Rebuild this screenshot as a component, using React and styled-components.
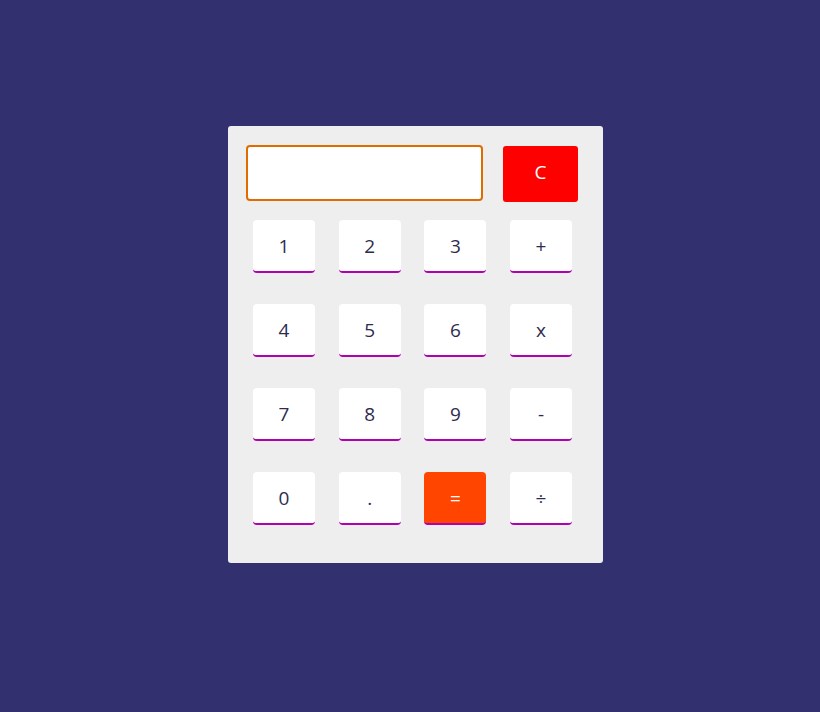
import React, { useState } from "react"
import styled, { createGlobalStyle } from "styled-components"

const GlobalStyle = createGlobalStyle`
    body {
        margin: 0;
        background: #333070;
        font-family: "Open Sans", "Liberation Sans", sans-serif;
    }
`

const Page = styled.div`
    min-height: 712px;
    padding: 126px 0 0 228px;
    box-sizing: border-box;
`

const Panel = styled.div`
    width: 375px;
    height: 437px;
    box-sizing: border-box;
    padding: 19px 18px;
    background: #eeeeee;
    border-radius: 3px;
`

const TopRow = styled.div`
    display: flex;
    align-items: flex-start;
    gap: 20px;
`

const Display = styled.input`
    width: 237px;
    height: 56px;
    box-sizing: border-box;
    border: 2px solid #e06c00;
    border-radius: 4px;
    background: #ffffff;
    font-family: inherit;
    font-size: 20px;
    padding: 0 10px;
    outline: none;
`

const ClearButton = styled.button`
    width: 75px;
    height: 56px;
    margin-top: 1px;
    padding: 0 0 4px;
    border: none;
    border-radius: 3px;
    background: #ff0000;
    color: #ffffff;
    font-family: inherit;
    font-size: 19px;
    cursor: pointer;
`

const Keys = styled.div`
    display: grid;
    grid-template-columns: repeat(4, 62px);
    column-gap: 23.67px;
    row-gap: 31px;
    margin: 18px 0 0 7px;
`

const Key = styled.button`
    height: 53px;
    box-sizing: border-box;
    border: none;
    border-bottom: 2px solid #b000b0;
    border-radius: 4px;
    background: ${(p) => (p.$accent ? "#ff4500" : "#ffffff")};
    color: ${(p) => (p.$accent ? "#ffffff" : "#2e2b4f")};
    font-family: inherit;
    font-size: 19px;
    padding: 0;
    cursor: pointer;
`

const keys = ["1", "2", "3", "+", "4", "5", "6", "x", "7", "8", "9", "-", "0", ".", "=", "÷"]

function App() {
    const [value, setValue] = useState("")

    return (
        <>
            <GlobalStyle />
            <Page>
                <Panel>
                    <TopRow>
                        <Display value={value} onChange={(e) => setValue(e.target.value)} />
                        <ClearButton onClick={() => setValue("")}>C</ClearButton>
                    </TopRow>
                    <Keys>
                        {keys.map((k) => (
                            <Key key={k} $accent={k === "="} onClick={() => setValue(value + k)}>
                                {k}
                            </Key>
                        ))}
                    </Keys>
                </Panel>
            </Page>
        </>
    )
}

export default App
